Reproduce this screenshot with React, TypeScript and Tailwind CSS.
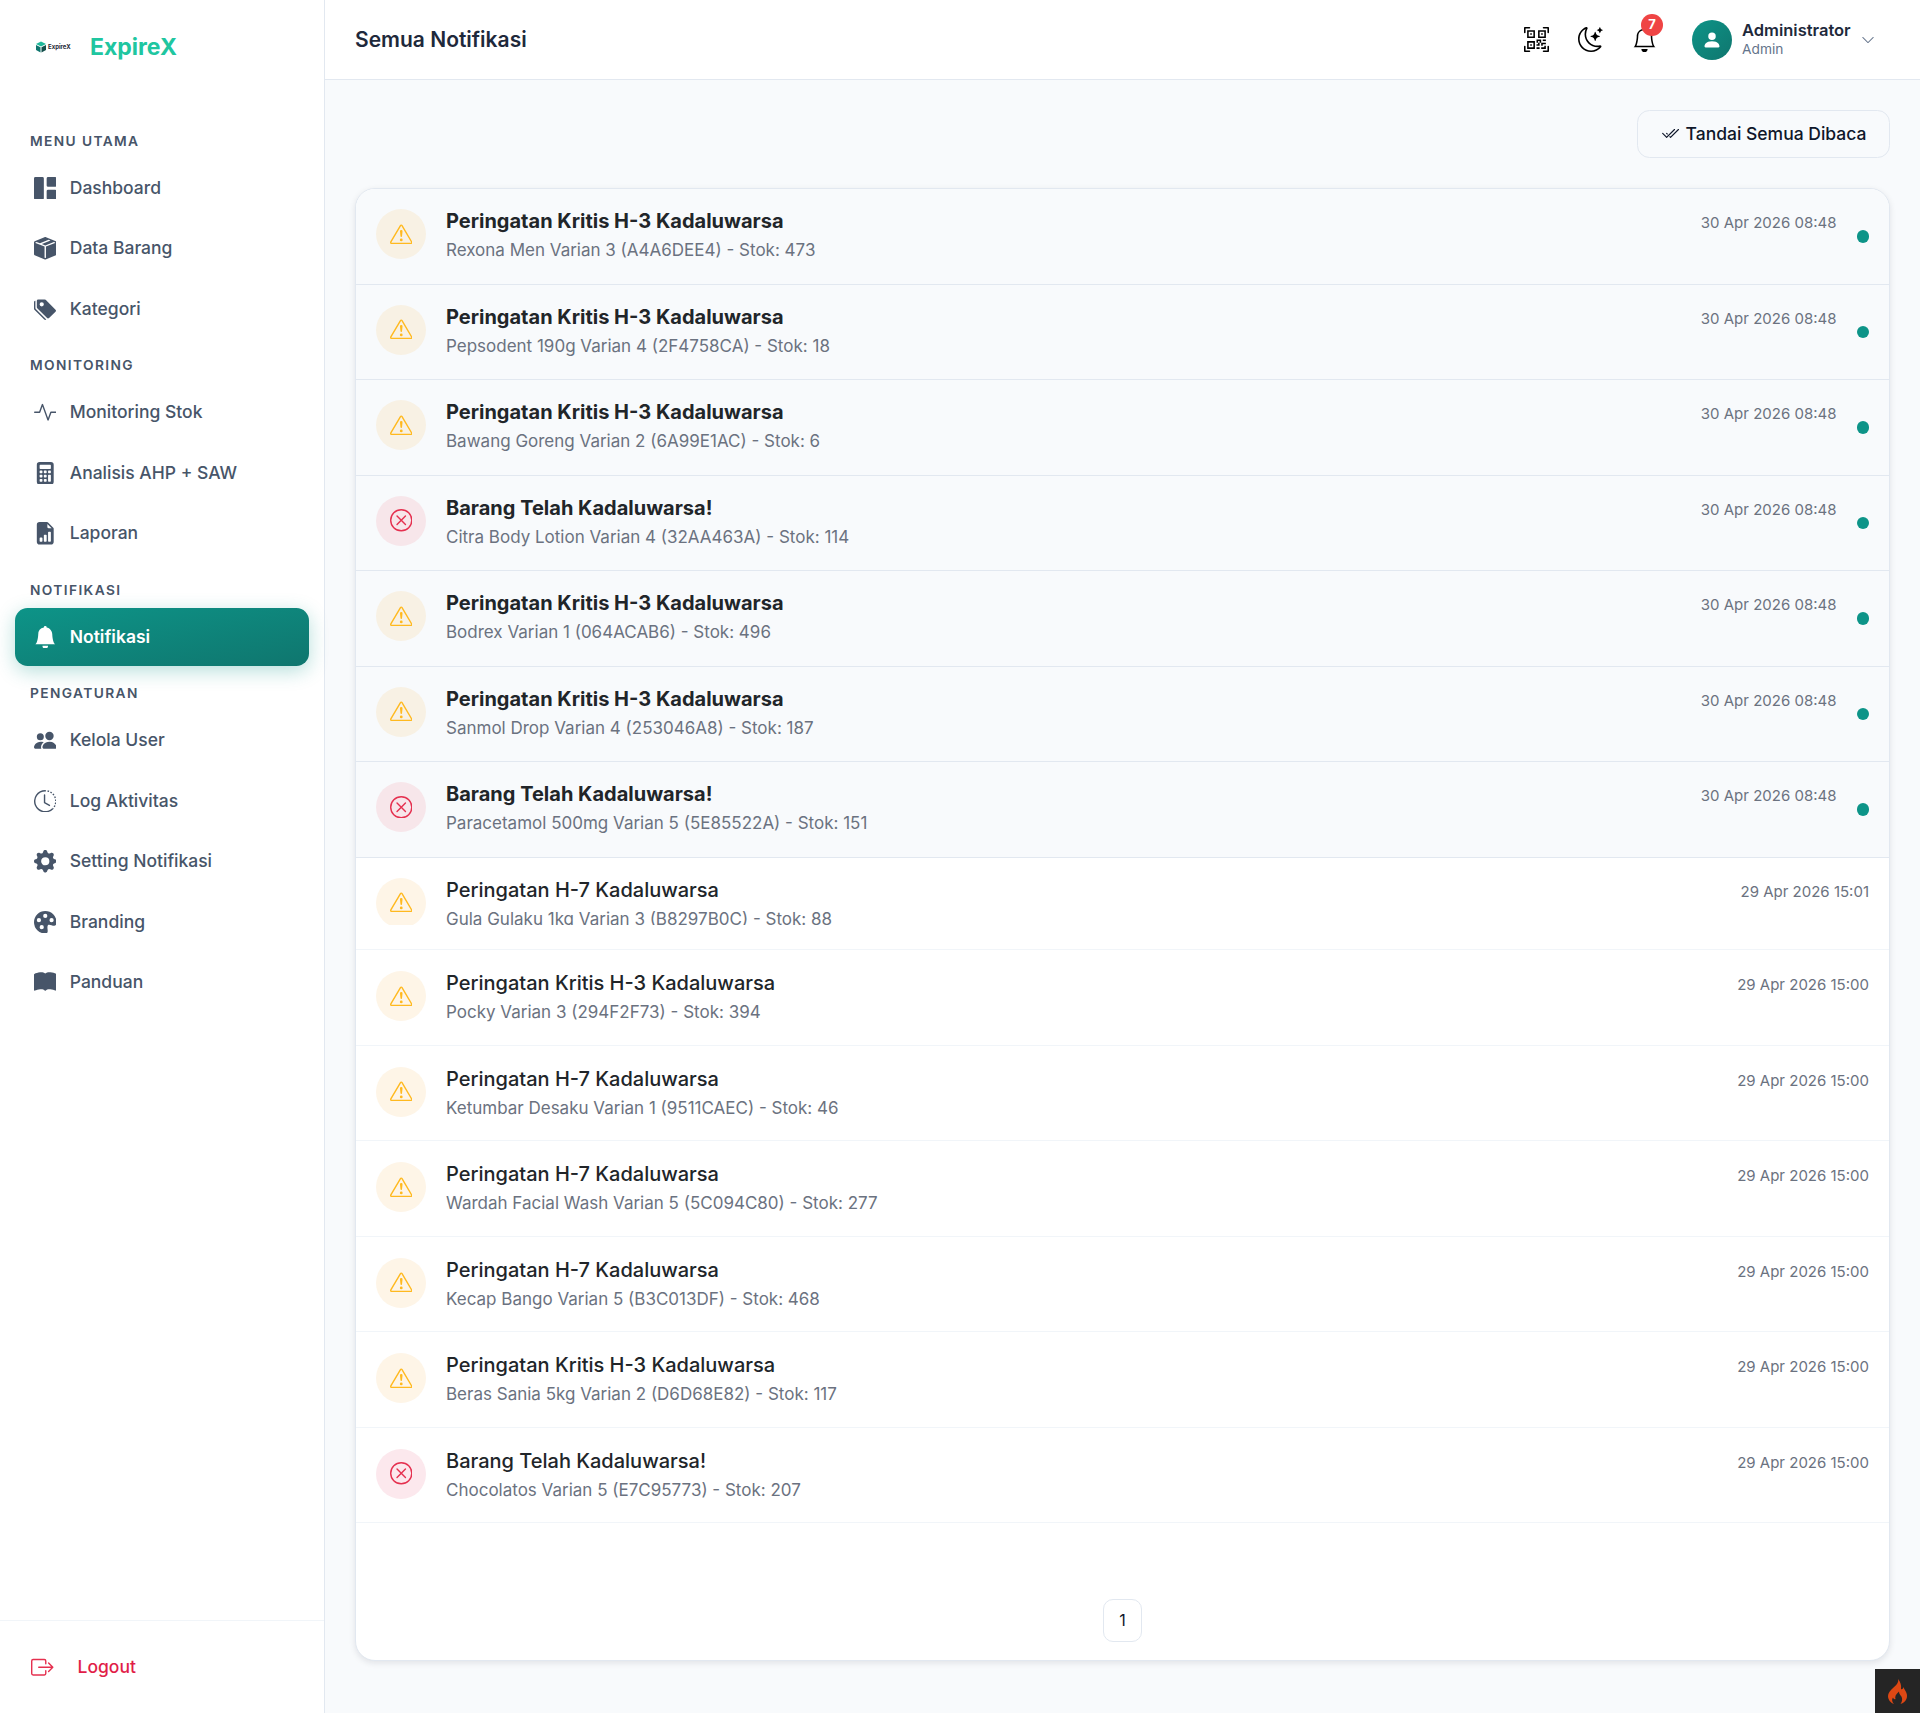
import {
  BsActivity,
  BsBell,
  BsBellFill,
  BsBookFill,
  BsBoxArrowRight,
  BsBoxSeamFill,
  BsCalculatorFill,
  BsCheck2All,
  BsChevronDown,
  BsClockHistory,
  BsExclamationTriangle,
  BsFileEarmarkBarGraphFill,
  BsGearFill,
  BsGrid1X2Fill,
  BsMoonStars,
  BsPaletteFill,
  BsPeopleFill,
  BsPersonFill,
  BsQrCodeScan,
  BsTagsFill,
  BsXCircle,
} from "react-icons/bs";

const menu = [
  {
    label: "MENU UTAMA",
    items: [
      { name: "Dashboard", icon: BsGrid1X2Fill },
      { name: "Data Barang", icon: BsBoxSeamFill },
      { name: "Kategori", icon: BsTagsFill },
    ],
  },
  {
    label: "MONITORING",
    items: [
      { name: "Monitoring Stok", icon: BsActivity },
      { name: "Analisis AHP + SAW", icon: BsCalculatorFill },
      { name: "Laporan", icon: BsFileEarmarkBarGraphFill },
    ],
  },
  {
    label: "NOTIFIKASI",
    items: [{ name: "Notifikasi", icon: BsBellFill, active: true }],
  },
  {
    label: "PENGATURAN",
    items: [
      { name: "Kelola User", icon: BsPeopleFill },
      { name: "Log Aktivitas", icon: BsClockHistory },
      { name: "Setting Notifikasi", icon: BsGearFill },
      { name: "Branding", icon: BsPaletteFill },
      { name: "Panduan", icon: BsBookFill },
    ],
  },
];

const KRITIS = "Peringatan Kritis H-3 Kadaluwarsa";
const H7 = "Peringatan H-7 Kadaluwarsa";
const EXPIRED = "Barang Telah Kadaluwarsa!";

const notifications = [
  { title: KRITIS, desc: "Rexona Men Varian 3 (A4A6DEE4) - Stok: 473", date: "30 Apr 2026 08:48", unread: true },
  { title: KRITIS, desc: "Pepsodent 190g Varian 4 (2F4758CA) - Stok: 18", date: "30 Apr 2026 08:48", unread: true },
  { title: KRITIS, desc: "Bawang Goreng Varian 2 (6A99E1AC) - Stok: 6", date: "30 Apr 2026 08:48", unread: true },
  { title: EXPIRED, desc: "Citra Body Lotion Varian 4 (32AA463A) - Stok: 114", date: "30 Apr 2026 08:48", unread: true },
  { title: KRITIS, desc: "Bodrex Varian 1 (064ACAB6) - Stok: 496", date: "30 Apr 2026 08:48", unread: true },
  { title: KRITIS, desc: "Sanmol Drop Varian 4 (253046A8) - Stok: 187", date: "30 Apr 2026 08:48", unread: true },
  { title: EXPIRED, desc: "Paracetamol 500mg Varian 5 (5E85522A) - Stok: 151", date: "30 Apr 2026 08:48", unread: true },
  { title: H7, desc: "Gula Gulaku 1kg Varian 3 (B8297B0C) - Stok: 88", date: "29 Apr 2026 15:01", cut: true },
  { title: KRITIS, desc: "Pocky Varian 3 (294F2F73) - Stok: 394", date: "29 Apr 2026 15:00", lower: true },
  { title: H7, desc: "Ketumbar Desaku Varian 1 (9511CAEC) - Stok: 46", date: "29 Apr 2026 15:00" },
  { title: H7, desc: "Wardah Facial Wash Varian 5 (5C094C80) - Stok: 277", date: "29 Apr 2026 15:00" },
  { title: H7, desc: "Kecap Bango Varian 5 (B3C013DF) - Stok: 468", date: "29 Apr 2026 15:00" },
  { title: KRITIS, desc: "Beras Sania 5kg Varian 2 (D6D68E82) - Stok: 117", date: "29 Apr 2026 15:00" },
  { title: EXPIRED, desc: "Chocolatos Varian 5 (E7C95773) - Stok: 207", date: "29 Apr 2026 15:00" },
];

function Sidebar() {
  return (
    <aside className="w-[325px] shrink-0 flex flex-col bg-white border-r border-[#e2e8f0]">
      <div className="h-[94px] flex items-center pl-[30px]">
        <div className="w-[60px] h-[30px] flex items-center pl-[5px] gap-[1px]">
          <svg viewBox="0 0 24 24" className="w-[12px] h-[12px] shrink-0">
            <path d="M12 1l10 5-10 5L2 6z" fill="#1fb89a" />
            <path d="M2 8l9 4.5V23l-9-5z" fill="#0f766e" />
            <path d="M22 8l-9 4.5V23l9-5z" fill="#134e4a" />
          </svg>
          <span className="text-[6px] leading-none font-bold text-[#1f2937]">ExpireX</span>
        </div>
        <span className="text-[23px] leading-none font-bold text-[#20c6a0]">ExpireX</span>
      </div>
      <nav className="px-[15px] pt-[19.5px]">
        {menu.map((section) => (
          <div key={section.label}>
            {/* margins here collapse with the item margin above */}
            <div className="mt-[19px] mb-[9.5px] pl-[15px] text-[13.75px] leading-[17px] font-semibold tracking-[0.1em] text-[#475569]">
              {section.label}
            </div>
            {section.items.map((item) => {
              const Icon = item.icon;
              return (
                <div
                  key={item.name}
                  className={
                    item.active
                      ? "h-[58px] mb-[2.5px] flex items-center gap-[13.5px] pl-[18.75px] rounded-[12.5px] bg-gradient-to-br from-[#0d9488] to-[#0f766e] text-white font-semibold shadow-[0_5px_19px_rgba(13,148,136,0.3)]"
                      : "h-[58px] mb-[2.5px] flex items-center gap-[13.5px] pl-[18.75px] rounded-[12.5px] text-[#475569] font-medium"
                  }
                >
                  <Icon className="w-[22.5px] h-[22.5px] shrink-0" />
                  <span className="text-[17.5px]">{item.name}</span>
                </div>
              );
            })}
          </div>
        ))}
      </nav>
      <div className="mt-auto h-[93px] flex items-center gap-[24px] pl-[31px] border-t border-[#f1f5f9] text-[#e5304f]">
        <BsBoxArrowRight className="w-[22.5px] h-[22.5px]" />
        <span className="text-[17.5px] font-medium text-[#e11d48]">Logout</span>
      </div>
    </aside>
  );
}

function Header() {
  return (
    <header className="h-[80px] flex items-center bg-white border-b border-[#e2e8f0] pl-[30px] pr-[45px]">
      <h1 className="text-[21px] font-semibold text-[#1e293b]">Semua Notifikasi</h1>
      <div className="ml-auto flex items-center text-black">
        <BsQrCodeScan className="w-[25px] h-[25px]" />
        <BsMoonStars className="w-[25px] h-[25px] ml-[29px]" />
        <div className="relative ml-[29px]">
          <BsBell className="w-[25px] h-[25px]" />
          <span className="absolute -top-[13px] left-[9px] w-[22px] h-[22px] rounded-full bg-[#ef4444] text-white text-[13px] font-bold flex items-center justify-center">
            7
          </span>
        </div>
        <div className="w-[40px] h-[40px] ml-[35px] rounded-full bg-gradient-to-br from-[#0d9488] to-[#0f766e] flex items-center justify-center text-white">
          <BsPersonFill className="w-[20px] h-[20px]" />
        </div>
        <div className="ml-[10px] w-[119px] -mt-[2px]">
          <div className="text-[16.5px] leading-[20px] font-semibold text-[#1e293b]">Administrator</div>
          <div className="text-[13.75px] leading-[18px] text-[#64748b]">Admin</div>
        </div>
        <BsChevronDown className="w-[14px] h-[14px] text-[#64748b]" />
      </div>
    </header>
  );
}

function NotificationRow({ n }: { n: (typeof notifications)[number] }) {
  const danger = n.title === EXPIRED;
  let circle = danger ? "bg-[#fce8ed] text-[#e5304f]" : "bg-[#fef5e7] text-[#ffb91f]";
  if (n.unread) circle = danger ? "bg-[#f7e6ea] text-[#e5304f]" : "bg-[#f8f1e4] text-[#ffb91f]";

  let row = "h-[95.5px] pt-[21px] bg-white border-b border-[#f1f5f9]";
  if (n.unread) row = "h-[95.5px] pt-[20px] bg-[#f8fafc] border-b border-[#e2e8f0]";
  if (n.cut) row = "h-[92px] pt-[20px] bg-white border-b border-[#f1f5f9]";
  if (n.lower) row = "h-[96px] pt-[21.5px] bg-white border-b border-[#f1f5f9]";

  return (
    <div className={`flex items-start px-[20px] ${row}`}>
      {/* the reference has a stitch line through this row, it cuts the content */}
      <div className={n.cut ? "flex gap-[20px] h-[47px] overflow-hidden" : "flex gap-[20px]"}>
        <div className={`w-[50px] h-[50px] rounded-full flex items-center justify-center shrink-0 ${circle}`}>
          {danger ? <BsXCircle className="w-[22.5px] h-[22.5px]" /> : <BsExclamationTriangle className="w-[22.5px] h-[22.5px]" />}
        </div>
        <div>
          <div className={`text-[20px] leading-[24px] mb-[4.25px] text-[#212529] ${n.unread ? "font-bold" : "font-medium"}`}>
            {n.title}
          </div>
          <div className="text-[17px] leading-[26.25px] text-[#6b7280]">{n.desc}</div>
        </div>
      </div>
      <div className="ml-auto flex items-center h-[55px]">
        <div className="self-start text-[15px] leading-[28px] text-[#6b7280]">{n.date}</div>
        {n.unread && <span className="w-[12.5px] h-[12.5px] rounded-full bg-[#0d9488] ml-[20px]" />}
      </div>
    </div>
  );
}

export default function App() {
  return (
    <div className="relative min-h-[1713px] flex bg-[#f8fafc] font-['Inter',sans-serif]">
      <Sidebar />
      <div className="flex-1 min-w-0 flex flex-col">
        <Header />
        <main className="flex-1 pt-[30px] pl-[30px] pr-[30px] pb-[52px] flex flex-col">
          <div className="flex justify-end mb-[30.5px]">
            <button className="h-[47.5px] w-[253px] flex items-center justify-center gap-[7px] rounded-[12.5px] border border-[#e2e8f0] text-[17.5px] font-medium text-[#0f172a]">
              <BsCheck2All className="w-[18px] h-[18px]" />
              Tandai Semua Dibaca
            </button>
          </div>
          <div className="flex-1 flex flex-col bg-white border border-[#e2e8f0] rounded-[20px] overflow-hidden shadow-[0_2px_6px_rgba(15,23,42,0.1)]">
            {notifications.map((n, i) => (
              <NotificationRow key={i} n={n} />
            ))}
            <div className="flex justify-center pt-[75.5px]">
              <span className="w-[39px] h-[43px] flex items-center justify-center rounded-[10px] border border-[#e2e8f0] text-[16px] text-[#0f172a]">
                1
              </span>
            </div>
          </div>
        </main>
      </div>
      <div className="absolute right-0 bottom-0 w-[45px] h-[44px] bg-[#252525] flex items-center justify-center">
        <svg viewBox="0 0 19 25" className="w-[19px] h-[25px]">
          <path
            d="M10 0C11 4 8 6 5 9C2 12 0 14 0 17C0 21 3 24 6 25C4 23 3.5 20.5 5 18.5C5.5 20 6.5 20.5 7.5 20C6.5 17.5 8 15 11 12.5C11 15.5 13.5 16.5 14 19C14.5 21.5 13.5 23.5 12.5 25C16 24 19 21 19 17C19 13 16.5 11.5 15.5 8C15 10 14 10.5 13 10C13.5 6 12.5 3 10 0Z"
            fill="#dd4814"
          />
        </svg>
      </div>
    </div>
  );
}
